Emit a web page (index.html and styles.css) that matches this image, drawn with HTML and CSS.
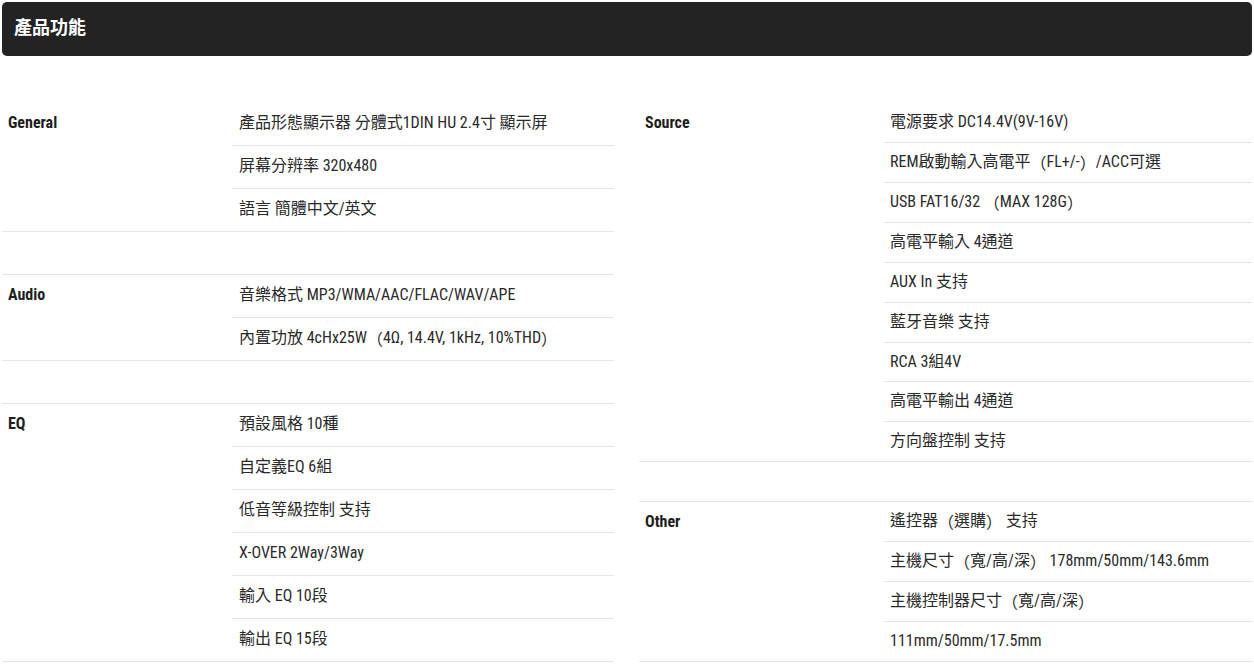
FILE: index.html
```html
<!DOCTYPE html>
<html lang="zh-Hant">
<head>
<meta charset="utf-8">
<title>產品功能</title>
<link rel="stylesheet" href="styles.css">
</head>
<body>
<div class="page">
  <div class="header">產品功能</div>
  <div class="specs">
    <div class="col col-left">
      <div class="label" style="grid-row: span 3">General</div>
      <div class="val">產品形態顯示器 分體式1DIN HU 2.4寸 顯示屏</div>
      <div class="val">屏幕分辨率 320x480</div>
      <div class="val last">語言 簡體中文/英文</div>
      <div class="spacer"></div>
      <div class="label" style="grid-row: span 2">Audio</div>
      <div class="val">音樂格式 MP3/WMA/AAC/FLAC/WAV/APE</div>
      <div class="val last">內置功放 4cHx25W<span class="fp">（</span>4Ω, 14.4V, 1kHz, 10%THD<span class="fp">）</span></div>
      <div class="spacer"></div>
      <div class="label" style="grid-row: span 6">EQ</div>
      <div class="val">預設風格 10種</div>
      <div class="val">自定義EQ 6組</div>
      <div class="val">低音等級控制 支持</div>
      <div class="val">X-OVER 2Way/3Way</div>
      <div class="val">輸入 EQ 10段</div>
      <div class="val last">輸出 EQ 15段</div>
    </div>
    <div class="col col-right">
      <div class="label" style="grid-row: span 9">Source</div>
      <div class="val">電源要求 DC14.4V(9V-16V)</div>
      <div class="val">REM啟動輸入高電平<span class="fp">（</span>FL+/-<span class="fp">）</span>/ACC可選</div>
      <div class="val">USB FAT16/32 <span class="fp">（</span>MAX 128G<span class="fp">）</span></div>
      <div class="val">高電平輸入 4通道</div>
      <div class="val">AUX In 支持</div>
      <div class="val">藍牙音樂 支持</div>
      <div class="val">RCA 3組4V</div>
      <div class="val">高電平輸出 4通道</div>
      <div class="val last">方向盤控制 支持</div>
      <div class="spacer"></div>
      <div class="label" style="grid-row: span 4">Other</div>
      <div class="val">遙控器<span class="fp">（</span>選購<span class="fp">）</span> 支持</div>
      <div class="val">主機尺寸<span class="fp">（</span>寬/高/深<span class="fp">）</span> 178mm/50mm/143.6mm</div>
      <div class="val">主機控制器尺寸<span class="fp">（</span>寬/高/深<span class="fp">）</span></div>
      <div class="val last">111mm/50mm/17.5mm</div>
    </div>
  </div>
</div>
</body>
</html>
```
FILE: styles.css
```css
html, body {
  margin: 0;
  padding: 0;
  background: #ffffff;
}

body {
  font-family: "Roboto Condensed", "Liberation Sans Narrow", "Roboto", "Noto Sans CJK TC", sans-serif;
  color: #222222;
}

.page {
  padding: 2px 2px 0 2px;
}

.header {
  height: 54px;
  line-height: 52px;
  background: #232323;
  border-radius: 5px;
  color: #ffffff;
  font-size: 18px;
  font-weight: 700;
  padding-left: 12px;
  font-family: "Roboto", "Noto Sans CJK TC", sans-serif;
}

.specs {
  display: flex;
  align-items: stretch;
  gap: 25px;
  margin-top: 47px;
}

.col {
  display: grid;
}

.col-left {
  width: 612px;
  grid-template-columns: 230px 1fr;
  grid-auto-rows: 43px;
}

.col-right {
  width: 613px;
  grid-template-columns: 245px 1fr;
  grid-auto-rows: 1fr;
}

.label {
  grid-column: 1;
  font-size: 16px;
  font-weight: 700;
  line-height: 20px;
  color: #1e1e1e;
  padding-left: 6px;
  border-bottom: 1px solid #e6e6e6;
}

.col-left .label {
  padding-top: 10px;
}

.col-right .label {
  padding-top: 10px;
}

.val {
  grid-column: 2;
  display: flex;
  align-items: center;
  white-space: pre;
  font-size: 16px;
  line-height: 20px;
  color: #2a2a2a;
  padding-left: 7px;
  padding-bottom: 3px;
  border-bottom: 1px solid #e6e6e6;
}

.col-right .val {
  padding-left: 6px;
  padding-bottom: 1px;
}

.fp {
  font-family: "Noto Sans CJK KR", "Noto Sans CJK TC", sans-serif;
}

.spacer {
  grid-column: 1 / span 2;
  border-bottom: 1px solid #e6e6e6;
}
```
